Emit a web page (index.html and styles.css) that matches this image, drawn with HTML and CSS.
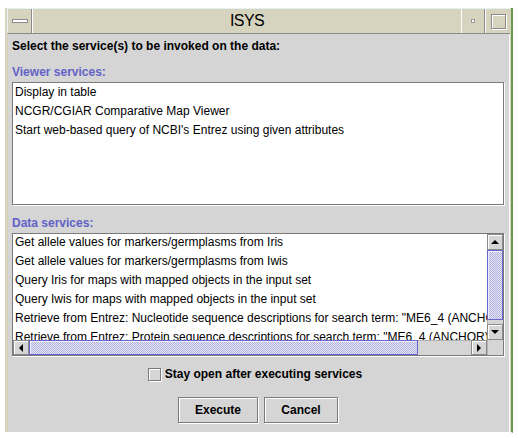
FILE: index.html
```html
<!DOCTYPE html>
<html>
<head>
<meta charset="utf-8">
<title>ISYS</title>
<link rel="stylesheet" href="styles.css">
</head>
<body>
<div class="window">
  <div class="titlebar">
    <div class="tb-btn tb-menu"><span class="bar"></span></div>
    <div class="tb-title">ISYS</div>
    <div class="tb-btn tb-iconify"><span class="dot"></span></div>
    <div class="tb-btn tb-max"><span class="box"></span></div>
  </div>
  <div class="panel">
    <div class="heading">Select the service(s) to be invoked on the data:</div>
    <div class="section-label">Viewer services:</div>
    <ul class="list viewer-list">
      <li>Display in table</li>
      <li>NCGR/CGIAR Comparative Map Viewer</li>
      <li>Start web-based query of NCBI's Entrez using given attributes</li>
    </ul>
    <div class="section-label">Data services:</div>
    <div class="scrollpane">
      <ul class="list-view">
        <li>Get allele values for markers/germplasms from Iris</li>
        <li>Get allele values for markers/germplasms from Iwis</li>
        <li>Query Iris for maps with mapped objects in the input set</li>
        <li>Query Iwis for maps with mapped objects in the input set</li>
        <li>Retrieve from Entrez: Nucleotide sequence descriptions for search term: "ME6_4 (ANCHOR)"</li>
        <li>Retrieve from Entrez: Protein sequence descriptions for search term: "ME6_4 (ANCHOR)"</li>
      </ul>
      <div class="vscroll">
        <div class="arrow-btn"><span class="tri up"></span></div>
        <div class="thumb v-thumb"></div>
        <div class="track"></div>
        <div class="arrow-btn"><span class="tri down"></span></div>
      </div>
      <div class="hscroll">
        <div class="arrow-btn"><span class="tri left"></span></div>
        <div class="thumb h-thumb"></div>
        <div class="track"></div>
        <div class="arrow-btn"><span class="tri right"></span></div>
      </div>
      <div class="corner"></div>
    </div>
    <label class="check-row"><span class="checkbox"></span><span>Stay open after executing services</span></label>
    <div class="buttons">
      <button class="btn btn-exec">Execute</button>
      <button class="btn btn-cancel">Cancel</button>
    </div>
  </div>
</div>
</body>
</html>
```
FILE: styles.css
```css
html, body {
  margin: 0;
  background: #ffffff;
}
body {
  padding: 8px 0 0 5px;
  font-family: "Liberation Sans", Arial, sans-serif;
  font-size: 12px;
  color: #000;
}
.window {
  width: 502px;
  padding-left: 3px;
  padding-right: 1px;
  background: #d6d3bf;
  border-right: 2px solid #6b9a4f;
  border-bottom: 1px solid #ffffff;
}
.titlebar {
  display: flex;
  height: 24px;
  background: #d6d3bf;
  border-top: 1px solid #e4f2f2;
  border-bottom: 1px solid #8a8a8a;
  border-left: 1px solid #e4f2f2;
  margin-left: -1px;
}
.tb-btn {
  display: flex;
  align-items: center;
  justify-content: center;
}
.tb-menu {
  width: 23px;
  border-right: 1px solid #8a8a8a;
}
.tb-menu .bar {
  width: 14px;
  height: 2px;
  background: #ffffff;
  border: 1px solid #8a8a8a;
}
.tb-title {
  flex: 1;
  text-align: center;
  font-size: 16px;
  line-height: 24px;
  letter-spacing: -0.6px;
  border-left: 1px solid #ffffff;
}
.tb-iconify {
  width: 22px;
  border-left: 1px solid #ffffff;
  border-right: 1px solid #8a8a8a;
}
.tb-iconify .dot {
  width: 2px;
  height: 2px;
  background: #fff;
  border: 1px solid #999;
}
.tb-max {
  width: 24px;
  border-left: 1px solid #ffffff;
}
.tb-max .box {
  width: 13px;
  height: 13px;
  border: 1px solid #8a8a8a;
  box-shadow: inset 1px 1px 0 #ffffff, 1px 1px 0 #ffffff;
}
.panel {
  background: #d5d5d5;
  width: 492px;
  padding: 5px 5px 9px 4px;
  border-right: 1px solid #ffffff;
  margin-left: 0;
}
.heading {
  font-weight: bold;
  line-height: 15px;
}
.section-label {
  margin-top: 11px;
  color: #6262c8;
  font-weight: bold;
  line-height: 15px;
}
.list, .list-view {
  list-style: none;
  margin: 0;
  padding: 0;
}
.list li, .list-view li {
  line-height: 19px;
  height: 19px;
  padding-left: 2px;
  white-space: nowrap;
}
.viewer-list {
  margin-top: 2px;
  height: 121px;
  background: #ffffff;
  border: 1px solid #7a7a7a;
  box-shadow: 1px 1px 0 #ffffff;
}
.scrollpane {
  margin-top: 2px;
  display: grid;
  grid-template-columns: 1fr 16px;
  grid-template-rows: 106px 15px;
  border: 1px solid #7a7a7a;
  box-shadow: 1px 1px 0 #ffffff;
  background: #ffffff;
}
.list-view {
  overflow: hidden;
  margin-top: -1px;
}
.vscroll {
  display: flex;
  flex-direction: column;
  background: #d5d5d5;
}
.hscroll {
  display: flex;
  background: #d5d5d5;
}
.corner {
  background: #d5d5d5;
  border-left: 1px solid #b0b0b0;
}
.arrow-btn {
  flex: none;
  width: 14px;
  height: 14px;
  display: flex;
  align-items: center;
  justify-content: center;
  background: #d5d5d5;
  border: 1px solid #8a8a8a;
  box-shadow: inset 1px 1px 0 #ffffff;
}
.vscroll .arrow-btn {
  height: 14px;
}
.hscroll .arrow-btn {
  height: 13px;
}
.thumb {
  flex: none;
  background-color: #ccccff;
  background-image: repeating-conic-gradient(#b4b4dc 0 25%, #e2e2fa 0 50%);
  background-size: 2px 2px;
  border: 1px solid #6666cc;
  box-shadow: inset 1px 1px 0 #eeeeff;
}
.v-thumb {
  height: 68px;
  margin: 0 0;
}
.h-thumb {
  width: 387px;
  height: 13px;
}
.track {
  flex: 1;
  background: #d5d5d5;
}
.vscroll .track {
  border-left: 1px solid #b0b0b0;
}
.hscroll .track {
  border-top: 1px solid #b0b0b0;
}
.tri {
  width: 0;
  height: 0;
}
.tri.up {
  border-left: 4px solid transparent;
  border-right: 4px solid transparent;
  border-bottom: 4px solid #000;
}
.tri.down {
  border-left: 4px solid transparent;
  border-right: 4px solid transparent;
  border-top: 4px solid #000;
}
.tri.left {
  border-top: 4px solid transparent;
  border-bottom: 4px solid transparent;
  border-right: 4px solid #000;
}
.tri.right {
  border-top: 4px solid transparent;
  border-bottom: 4px solid transparent;
  border-left: 4px solid #000;
}
.check-row {
  margin-top: 11px;
  display: flex;
  align-items: center;
  justify-content: center;
  gap: 4px;
  font-weight: bold;
  line-height: 15px;
  padding-right: 6px;
}
.checkbox {
  width: 11px;
  height: 11px;
  border: 1px solid #7a7a7a;
  box-shadow: inset 1px 1px 0 #ffffff, 1px 1px 0 #ffffff;
  background: #d5d5d5;
}
.buttons {
  margin-top: 15px;
  display: flex;
  justify-content: center;
  gap: 6px;
}
.btn {
  height: 26px;
  margin: 0;
  padding: 0;
  font-family: "Liberation Sans", Arial, sans-serif;
  font-size: 12px;
  font-weight: bold;
  color: #000;
  background: #d5d5d5;
  border: 1px solid #7a7a7a;
  box-shadow: inset 1px 1px 0 #ffffff, 1px 1px 0 #ffffff;
  border-radius: 0;
}
.btn-exec {
  width: 80px;
}
.btn-cancel {
  width: 74px;
}
```
